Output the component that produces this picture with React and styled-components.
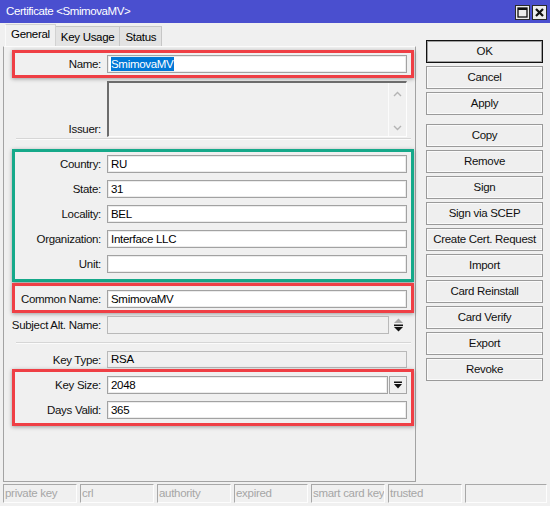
import React from "react";
import styled, { createGlobalStyle, css } from "styled-components";

const GlobalStyle = createGlobalStyle`
  html, body { margin: 0; padding: 0; background: #f0f0f0; }
  body {
    font-family: "Liberation Sans", Arial, sans-serif;
    font-size: 11.5px;
    letter-spacing: -0.3px;
    color: #000;
  }
  * { box-sizing: border-box; }
`;

const Window = styled.div`
  width: 550px;
  height: 506px;
  background: #f0f0f0;
  display: flex;
  flex-direction: column;
  overflow: hidden;
`;

const TitleBar = styled.div`
  height: 23px;
  flex: none;
  background: #4a4fcf;
  display: flex;
  align-items: center;
  padding: 0 3px 0 6px;
`;

const Title = styled.div`
  flex: 1;
  color: #fff;
  font-size: 11.5px;
  letter-spacing: -0.4px;
  line-height: 23px;
  white-space: nowrap;
`;

const TitleButtons = styled.div`
  display: flex;
  gap: 2px;
  margin-top: 1px;
`;

const TitleButton = styled.div`
  width: 15px;
  height: 15px;
  border: 1px solid #2a2a2a;
  background: #ececec;
  display: flex;
  align-items: center;
  justify-content: center;
`;

const Main = styled.div`
  flex: none;
  height: 459px;
  display: flex;
`;

const LeftCol = styled.div`
  width: 416px;
  display: flex;
  flex-direction: column;
`;

const Tabs = styled.div`
  height: 23px;
  flex: none;
  display: flex;
  align-items: flex-end;
  padding-left: 5px;
`;

const Tab = styled.div`
  padding: 0 5px;
  white-space: nowrap;
  ${(p) =>
    p.$active
      ? css`
          height: 22px;
          line-height: 19px;
          background: #f0f0f0;
          border: 1px solid #d2d2d2;
          border-left-color: #fafafa;
          border-bottom: none;
        `
      : css`
          height: 20px;
          line-height: 20px;
          background: #e3e3e3;
          border: 1px solid #c6c6c6;
          border-bottom: none;
          border-left: none;
        `}
`;

const Panel = styled.div`
  flex: 1;
  margin-left: 3px;
  width: 413px;
  border: 1px solid #a3a3a3;
  border-top-color: #fcfcfc;
  display: flex;
  flex-direction: column;
`;

const toneColor = { red: "#ef3f45", green: "#16a98a" };

const Section = styled.div`
  margin-left: 8px;
  width: 402px;
  margin-top: ${(p) => p.$mt || 0}px;
  display: flex;
  flex-direction: column;
  gap: ${(p) => p.$gap || 0}px;
  padding: ${(p) => p.$pt || 0}px 0 ${(p) => p.$pb || 0}px;
  ${(p) =>
    p.$tone
      ? css`
          border: 3px solid ${toneColor[p.$tone]};
          box-shadow: 0 1px 4px rgba(0, 0, 0, 0.35);
        `
      : css`
          border-left: 3px solid transparent;
          border-right: 3px solid transparent;
        `}
`;

const Row = styled.div`
  display: grid;
  grid-template-columns: 86px 300px;
  column-gap: 6px;
  align-items: ${(p) => (p.$bottom ? "end" : "center")};
`;

const Label = styled.div`
  display: flex;
  justify-content: flex-end;
  white-space: nowrap;
  line-height: 16px;
  color: #111;
`;

const Field = styled.div`
  height: ${(p) => p.$h || 18}px;
  flex: 1;
  min-width: 0;
  padding: 0 3px;
  line-height: ${(p) => (p.$h || 18) - 2}px;
  white-space: nowrap;
  overflow: hidden;
  ${(p) =>
    p.$disabled
      ? css`
          background: #f0f0f0;
          border: 1px solid #b9b9b9;
        `
      : css`
          background: #fff;
          border: 1px solid #a2a2a2;
          box-shadow: inset 0 0 0 1px #ececec;
        `}
`;

const Selected = styled.span`
  background: #0078d7;
  color: #fff;
  padding: 1px 1px 1px 0;
`;

const FieldGroup = styled.div`
  display: flex;
  align-items: center;
  gap: ${(p) => p.$gap || 0}px;
  width: 300px;
`;

const IssuerBox = styled.div`
  height: 56px;
  border-top: 2px solid #6c6c6c;
  border-left: 2px solid #6c6c6c;
  border-right: 1px solid #fdfdfd;
  border-bottom: 1px solid #fdfdfd;
  background: #f0f0f0;
  display: flex;
  justify-content: flex-end;
`;

const ScrollTrack = styled.div`
  width: 18px;
  border-left: 1px solid #fbfbfb;
  display: flex;
  flex-direction: column;
  justify-content: space-between;
  align-items: center;
  padding: 8px 0 5px;
`;

const Separator = styled.div`
  margin: ${(p) => p.$mt || 0}px 0 0 12px;
  width: 395px;
  height: 2px;
  border-top: 1px solid #d6d6d6;
  border-bottom: 1px solid #fbfbfb;
`;

const SpinIcon = styled.div`
  width: 18px;
  display: flex;
  justify-content: center;
`;

const DropButton = styled.div`
  width: 18px;
  height: 18px;
  border: 1px solid #a7a7a7;
  background: #f0f0f0;
  display: flex;
  align-items: center;
  justify-content: center;
`;

const ButtonCol = styled.div`
  width: 117px;
  margin-left: 10px;
  padding-top: 17px;
  display: flex;
  flex-direction: column;
  gap: 3px;
`;

const Button = styled.div`
  height: 23px;
  margin-top: ${(p) => p.$mt || 0}px;
  background: #efefef;
  border: 1px solid ${(p) => (p.$default ? "#111" : "#9a9a9a")};
  box-shadow: inset 0 0 0 1px ${(p) => (p.$default ? "#a0a0a0" : "#fafafa")};
  text-align: center;
  line-height: 21px;
  white-space: nowrap;
  color: #111;
`;

const StatusBar = styled.div`
  flex: none;
  margin-top: 2px;
  height: 19px;
  padding-left: 3px;
  display: flex;
  gap: 3px;
`;

const StatusCell = styled.div`
  width: ${(p) => p.$w || 74}px;
  height: 19px;
  border-top: 1px solid #a8a8a8;
  border-left: 1px solid #a8a8a8;
  border-right: 1px solid #fdfdfd;
  border-bottom: 1px solid #fdfdfd;
  color: #a6a6a6;
  padding-left: 1px;
  line-height: 17px;
  white-space: nowrap;
  overflow: hidden;
`;

const Chevron = ({ up }) => (
  <svg width="9" height="6" viewBox="0 0 9 6">
    <path
      d={up ? "M1 5 L4.5 1.5 L8 5" : "M1 1 L4.5 4.5 L8 1"}
      fill="none"
      stroke="#b4b4b4"
      strokeWidth="1.4"
    />
  </svg>
);

const SpinArrows = () => (
  <svg width="11" height="14" viewBox="0 0 11 14">
    <path d="M5.5 0.5 L10 5 L1 5 Z" fill="#a8a8a8" />
    <rect x="1" y="6.5" width="9" height="1.6" fill="#111" />
    <path d="M1 9 L10 9 L5.5 13.5 Z" fill="#111" />
  </svg>
);

const DropArrow = () => (
  <svg width="10" height="9" viewBox="0 0 10 9">
    <rect x="1" y="0.5" width="8" height="1.5" fill="#111" />
    <path d="M1 3 L9 3 L5 7.5 Z" fill="#111" />
  </svg>
);

const MaxIcon = () => (
  <svg width="11" height="11" viewBox="0 0 11 11">
    <rect x="1" y="1" width="9" height="9" fill="none" stroke="#111" strokeWidth="1.3" />
    <rect x="1" y="1" width="9" height="2" fill="#111" />
  </svg>
);

const CloseIcon = () => (
  <svg width="11" height="11" viewBox="0 0 11 11">
    <path d="M2 2 L9 9 M9 2 L2 9" stroke="#111" strokeWidth="2.2" />
  </svg>
);

const subjectFields = [
  ["Country:", "RU"],
  ["State:", "31"],
  ["Locality:", "BEL"],
  ["Organization:", "Interface LLC"],
  ["Unit:", ""],
];

const buttons = [
  { t: "OK", def: true },
  { t: "Cancel" },
  { t: "Apply" },
  { t: "Copy", mt: 6 },
  { t: "Remove" },
  { t: "Sign" },
  { t: "Sign via SCEP" },
  { t: "Create Cert. Request" },
  { t: "Import" },
  { t: "Card Reinstall" },
  { t: "Card Verify" },
  { t: "Export" },
  { t: "Revoke" },
];

const statuses = [
  ["private key"],
  ["crl"],
  ["authority"],
  ["expired"],
  ["smart card key"],
  ["trusted"],
  ["", 82],
];

export default function App() {
  return (
    <>
      <GlobalStyle />
      <Window>
        <TitleBar>
          <Title>Certificate &lt;SmimovaMV&gt;</Title>
          <TitleButtons>
            <TitleButton>
              <MaxIcon />
            </TitleButton>
            <TitleButton>
              <CloseIcon />
            </TitleButton>
          </TitleButtons>
        </TitleBar>
        <Main>
          <LeftCol>
            <Tabs>
              <Tab $active>General</Tab>
              <Tab>Key Usage</Tab>
              <Tab>Status</Tab>
            </Tabs>
            <Panel>
              <Section $tone="red" $mt={3} $pt={2} $pb={2}>
                <Row>
                  <Label>Name:</Label>
                  <Field>
                    <Selected>SmimovaMV</Selected>
                  </Field>
                </Row>
              </Section>
              <Section $mt={3}>
                <Row $bottom>
                  <Label>Issuer:</Label>
                  <IssuerBox>
                    <ScrollTrack>
                      <Chevron up />
                      <Chevron />
                    </ScrollTrack>
                  </IssuerBox>
                </Row>
              </Section>
              <Separator $mt={1} />
              <Section $tone="green" $mt={9} $pt={3} $pb={6} $gap={7}>
                {subjectFields.map(([l, v]) => (
                  <Row key={l}>
                    <Label>{l}</Label>
                    <Field>{v}</Field>
                  </Row>
                ))}
              </Section>
              <Section $tone="red" $mt={1} $pt={4} $pb={2}>
                <Row>
                  <Label>Common Name:</Label>
                  <Field>SmimovaMV</Field>
                </Row>
              </Section>
              <Section $mt={3}>
                <Row>
                  <Label>Subject Alt. Name:</Label>
                  <FieldGroup $gap={0}>
                    <Field $disabled />
                    <SpinIcon>
                      <SpinArrows />
                    </SpinIcon>
                  </FieldGroup>
                </Row>
              </Section>
              <Separator $mt={8} />
              <Section $mt={7}>
                <Row>
                  <Label>Key Type:</Label>
                  <Field $disabled $h={17}>RSA</Field>
                </Row>
              </Section>
              <Section $tone="red" $mt={1} $pt={4} $pb={4} $gap={7}>
                <Row>
                  <Label>Key Size:</Label>
                  <FieldGroup $gap={1}>
                    <Field>2048</Field>
                    <DropButton>
                      <DropArrow />
                    </DropButton>
                  </FieldGroup>
                </Row>
                <Row>
                  <Label>Days Valid:</Label>
                  <Field>365</Field>
                </Row>
              </Section>
            </Panel>
          </LeftCol>
          <ButtonCol>
            {buttons.map((b) => (
              <Button key={b.t} $default={b.def} $mt={b.mt}>
                {b.t}
              </Button>
            ))}
          </ButtonCol>
        </Main>
        <StatusBar>
          {statuses.map(([t, w], i) => (
            <StatusCell key={i} $w={w}>
              {t}
            </StatusCell>
          ))}
        </StatusBar>
      </Window>
    </>
  );
}
